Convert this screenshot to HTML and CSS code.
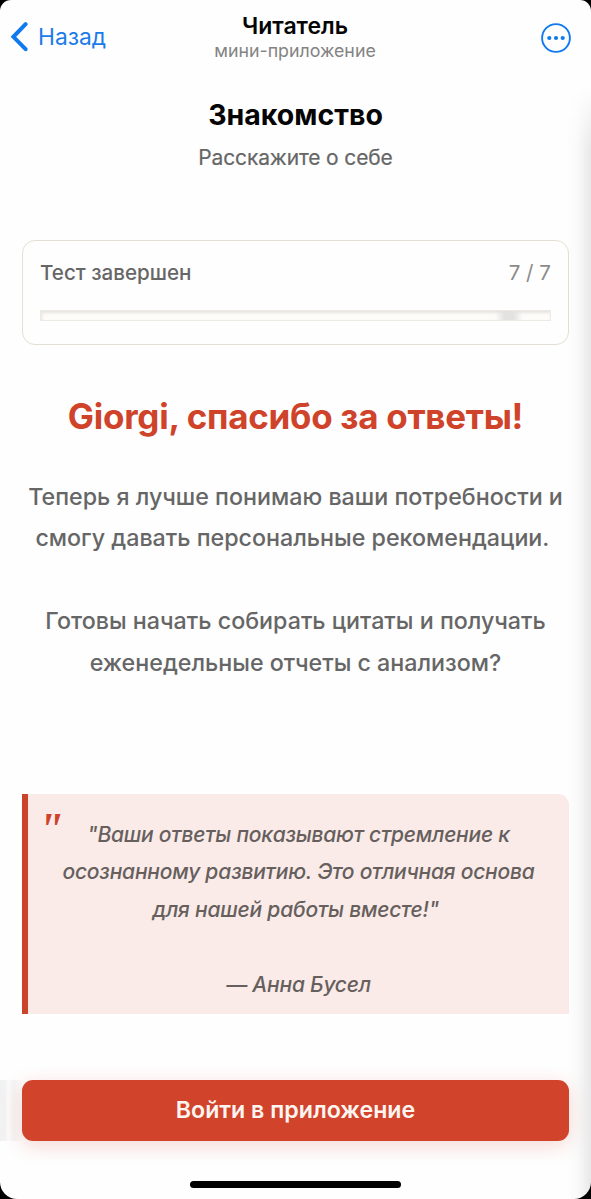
FILE: index.html
```html
<!DOCTYPE html>
<html lang="ru">
<head>
<meta charset="utf-8">
<title>Читатель</title>
<link rel="stylesheet" href="styles.css">
</head>
<body>
<div class="screen">
  <header class="navbar">
    <div class="back">
      <svg class="back-icon" width="18" height="30" viewBox="0 0 18 30" fill="none" stroke="#0f7af0" stroke-width="4" stroke-linecap="round" stroke-linejoin="miter"><path d="M15.6 2.2 3.4 14.8 15.6 27.2"/></svg>
      <span class="back-label">Назад</span>
    </div>
    <div class="app-title">
      <div class="app-name">Читатель</div>
      <div class="app-kind">мини-приложение</div>
    </div>
    <svg class="more" width="30" height="30" viewBox="0 0 30 30" fill="none"><circle cx="15" cy="15" r="13.9" stroke="#0f7af0" stroke-width="1.9"/><g fill="#0f7af0"><circle cx="8.3" cy="15" r="2.1"/><circle cx="15" cy="15" r="2.1"/><circle cx="21.7" cy="15" r="2.1"/></g></svg>
  </header>
  <main class="content">
    <h1 class="heading">Знакомство</h1>
    <p class="subheading">Расскажите о себе</p>
    <section class="progress-card">
      <div class="progress-row">
        <span class="progress-label">Тест завершен</span>
        <span class="progress-count">7 / 7</span>
      </div>
      <div class="progress-track"><div class="progress-glow"></div></div>
    </section>
    <h2 class="thanks">Giorgi, спасибо за ответы!</h2>
    <p class="message">Теперь я лучше понимаю ваши потребности и<br>смогу давать персональные рекомендации.&nbsp;<br><br>Готовы начать собирать цитаты и получать<br>еженедельные отчеты с анализом?</p>
    <blockquote class="quote">
      <span class="quote-mark">"</span>
      <p class="quote-text">"Ваши ответы показывают стремление к<br>осознанному развитию. Это отличная основа<br>для нашей работы вместе!"&nbsp;<br><br>— Анна Бусел</p>
    </blockquote>
    <div class="action"><button class="enter">Войти в приложение</button></div>
  </main>
  <div class="home-indicator"></div>
  <div class="edge-shadow"></div>
</div>
</body>
</html>
```
FILE: styles.css
```css
* { box-sizing: border-box; margin: 0; padding: 0; }
body { background: #000; font-family: Inter, "Liberation Sans", sans-serif; }
.screen {
  position: relative;
  width: 591px;
  height: 1199px;
  overflow: hidden;
  background: #fefefe;
  border-radius: 11px 11px 17px 17px;
  display: flex;
  flex-direction: column;
  white-space: nowrap;
}
.navbar {
  height: 76px;
  display: grid;
  grid-template-columns: 1fr auto 1fr;
  padding: 0 20px 0 10px;
}
.back { display: flex; gap: 10px; padding-top: 22px; height: 52px; }
.back-label { color: #1b7bea; font-size: 22.8px; line-height: 30px; }
.app-title { text-align: center; padding-top: 12px; margin-left: 9px; }
.app-name { font-size: 23px; line-height: 28px; font-weight: 600; color: #050505; }
.app-kind { font-size: 17.8px; line-height: 22px; color: #838383; }
.more { justify-self: end; margin-top: 23px; }
.content { flex: 1; padding: 0 22px; text-align: center; }
.heading { margin-top: 21px; font-size: 28.5px; line-height: 36px; font-weight: 700; color: #050505; }
.subheading { margin-top: 11px; font-size: 21px; line-height: 28px; letter-spacing: -.15px; -webkit-text-stroke: .2px #666; color: #666; }
.progress-card {
  margin-top: 68px;
  height: 105px;
  border: 1.5px solid #e3dfd2;
  border-radius: 13px;
  padding: 18px 17px 0;
}
.progress-row { display: flex; justify-content: space-between; line-height: 28px; }
.progress-label { font-size: 20.6px; font-weight: 500; color: #666; }
.progress-count { font-size: 20.6px; color: #8b8b8b; }
.progress-track {
  margin-top: 23px;
  height: 11px;
  background: #fdfcf9;
  border: 1px solid #eceae3;
  box-shadow: inset 1px 2px 3px #e6e4df;
}
.progress-glow {
  width: 28px;
  height: 9px;
  margin-left: 454px;
  background: linear-gradient(90deg, transparent, #e2e1df 35%, #e2e1df 65%, transparent);
}
.thanks { margin-top: 48px; font-size: 35px; line-height: 46px; font-weight: 700; letter-spacing: -.28px; color: #cf432b; }
.message { margin-top: 37px; font-size: 23.25px; line-height: 41.4px; font-weight: 500; color: #666; margin-left: -10px; margin-right: -10px; }
.quote {
  position: relative;
  margin-top: 111px;
  height: 220px;
  background: #faebe8;
  border-left: 6px solid #cb432b;
  border-radius: 0 11px 0 0;
  padding-top: 22px;
  font-style: italic;
  color: #665f5d;
}
.quote-text { font-size: 21px; line-height: 37.4px; font-weight: 500; letter-spacing: -.22px; }
.quote-mark {
  position: absolute;
  left: 10px;
  top: 8px;
  font: italic 700 46px/56px "Liberation Serif", serif;
  color: #cf432b;
}
.action {
  margin: 66px -22px 0;
  padding: 0 22px;
  height: 61px;
  background: linear-gradient(90deg, #f1f1f1 0, #f2f2f2 5px, #fbfbfb 8px, #f4f4f4 14px, #fefefe 24px);
}
.enter {
  display: block;
  width: 100%;
  height: 61px;
  border: 0;
  border-radius: 11px;
  background: #d2432b;
  color: #fff5f0;
  font: 600 23.2px/61px Inter, "Liberation Sans", sans-serif;
  box-shadow: 0 5px 20px rgba(210, 67, 43, .2);
}
.home-indicator {
  align-self: center;
  width: 211px;
  height: 7px;
  margin-bottom: 11px;
  border-radius: 4px;
  background: #000;
}
.edge-shadow {
  position: absolute;
  top: 85px;
  right: 0;
  bottom: 0;
  width: 24px;
  background: linear-gradient(90deg, transparent, rgba(0, 0, 0, .018) 45%, rgba(0, 0, 0, .085));
  mask-image: linear-gradient(180deg, transparent, #000 65px);
}
```
